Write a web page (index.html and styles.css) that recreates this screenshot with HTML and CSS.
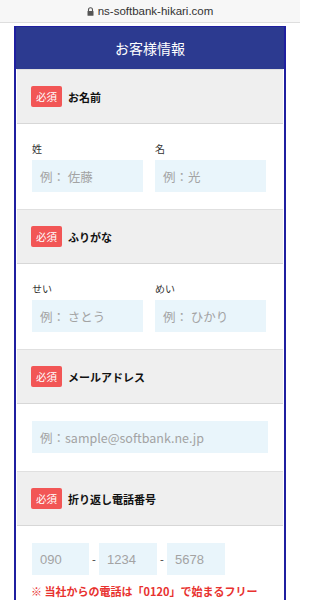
FILE: index.html
```html
<!DOCTYPE html>
<html lang="ja">
<head>
<meta charset="utf-8">
<link rel="stylesheet" href="styles.css">
</head>
<body>
<div class="addr">
  <svg class="lock" width="7" height="9" viewBox="0 0 7 9"><path d="M1.5 4V2.8a2 2 0 0 1 4 0V4" fill="none" stroke="#555" stroke-width="1.1"/><rect x="0.5" y="4" width="6" height="4.8" rx="0.6" fill="#555"/></svg>
  <span>ns-softbank-hikari.com</span>
</div>
<div class="card">
  <div class="head">お客様情報</div>
  <div class="sec-h"><span class="req">必須</span><span class="lbl">お名前</span></div>
  <div class="sec-b">
    <div class="row">
      <div class="col"><div class="flbl">姓</div><div class="inp w-name">例： 佐藤</div></div>
      <div class="col"><div class="flbl">名</div><div class="inp w-name">例：光</div></div>
    </div>
  </div>
  <div class="sec-h"><span class="req">必須</span><span class="lbl">ふりがな</span></div>
  <div class="sec-b">
    <div class="row">
      <div class="col"><div class="flbl">せい</div><div class="inp w-name">例： さとう</div></div>
      <div class="col"><div class="flbl">めい</div><div class="inp w-name">例： ひかり</div></div>
    </div>
  </div>
  <div class="sec-h"><span class="req">必須</span><span class="lbl">メールアドレス</span></div>
  <div class="sec-b sec-single">
    <div class="inp w-mail">例：sample@softbank.ne.jp</div>
  </div>
  <div class="sec-h"><span class="req">必須</span><span class="lbl">折り返し電話番号</span></div>
  <div class="sec-b sec-phone">
    <div class="phone">
      <div class="inp w-tel num">090</div><span class="dash">-</span>
      <div class="inp w-tel2 num">1234</div><span class="dash">-</span>
      <div class="inp w-tel2 num">5678</div>
    </div>
    <p class="note">※ 当社からの電話は「0120」で始まるフリー</p>
  </div>
</div>
</body>
</html>
```
FILE: styles.css
```css
html, body { margin: 0; padding: 0; background: #fff; }
body { font-family: "Noto Sans CJK JP", "Noto Sans", sans-serif; width: 300px; height: 600px; overflow: hidden; }
.addr {
  height: 22px; background: #f7f7f7; border-bottom: 1px solid #dedede;
  display: flex; align-items: center; justify-content: center; gap: 4px;
  font-family: "Liberation Sans", Arial, sans-serif; font-size: 11.5px; color: #333;
}
.card {
  margin: 3px 14px 0; border: 2px solid #1f1fa0; border-bottom: none;
  width: 268px; height: 600px; background: #fff;
}
.head {
  height: 42px; background: #2c3a90; color: #fff;
  display: flex; align-items: center; justify-content: center;
  font-size: 14px; margin-top: -1px;
}
.sec-h {
  margin: 0 1px; background: #efefef; height: 53px;
  border-top: 1px solid #e0e0e0; border-bottom: 1px solid #d7d7d7;
  display: flex; align-items: center; padding-left: 14px; gap: 6px;
}
.sec-h:first-of-type { border-top-color: #f4f4f4; }
.req {
  background: #f25656; color: #fff; border-radius: 2px;
  width: 31px; height: 21px; display: flex; align-items: center; justify-content: center;
  font-size: 10.5px;
}
.lbl { font-size: 11px; font-weight: 700; color: #111; }
.sec-b { margin: 0 1px; padding: 18px 0 17px 15px; }
.row { display: flex; gap: 12px; }
.flbl { font-size: 10px; color: #333; line-height: 14px; margin-bottom: 4px; }
.inp {
  background: #e9f5fb; height: 32px; display: flex; align-items: center;
  padding-left: 8px; box-sizing: border-box; color: #a3a3a3; font-size: 12.5px;
}
.num { font-family: "Liberation Sans", Arial, sans-serif; font-size: 13px; }
.w-name { width: 111px; }
.sec-single { padding: 17px 0 18px 15px; }
.w-mail { width: 236px; }
.sec-phone { padding: 17px 0 0 15px; }
.phone { display: flex; align-items: center; }
.w-tel { width: 57px; }
.w-tel2 { width: 58px; }
.dash { width: 10px; text-align: center; font-size: 11px; color: #333; }
.note { margin: 8px 0 0 -1px; color: #e8322f; font-size: 11px; font-weight: 700; white-space: nowrap; }
```
